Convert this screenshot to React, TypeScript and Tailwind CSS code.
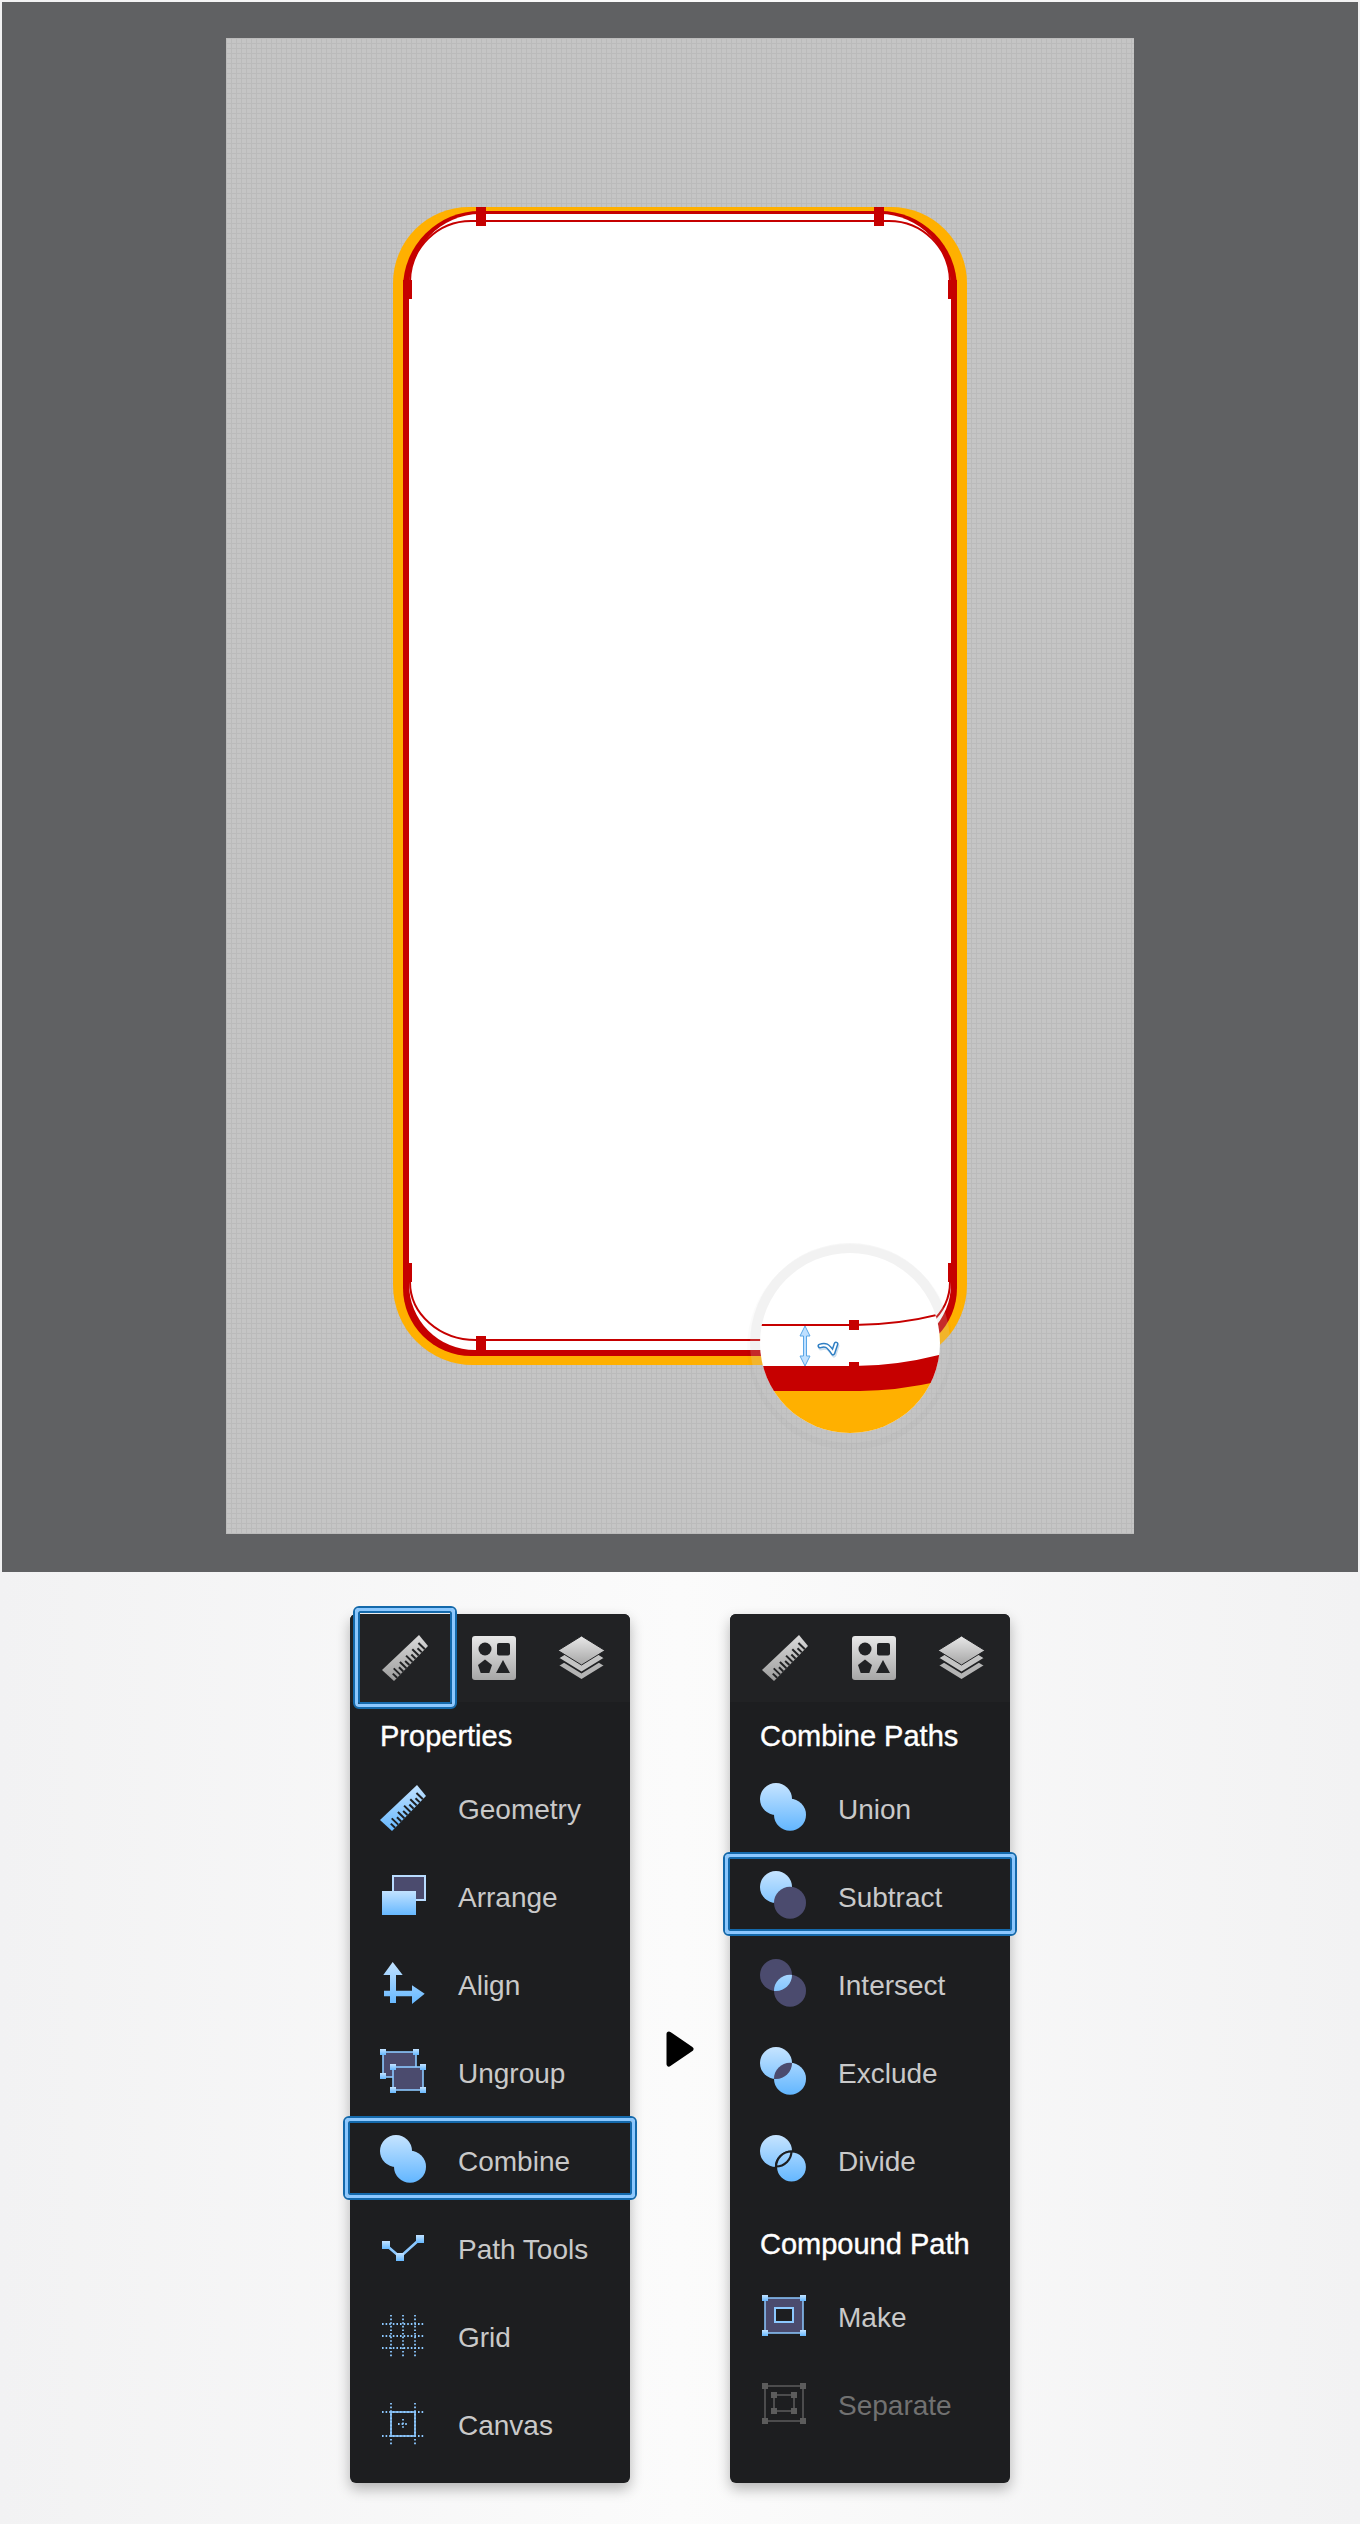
import type { ReactNode } from 'react';

const BG = '#1d1e20';
const DARK = '#4b4b6e';
const BLUE = '#8cc8ff';
const RED = '#c60000';
const YELLOW = '#ffb000';

function Icon({ children }: { children: ReactNode }) {
  return (
    <svg width="46" height="46" viewBox="0 0 46 46" className="shrink-0 overflow-visible">
      {children}
    </svg>
  );
}

function Ruler({ fill, tick }: { fill: string; tick: string }) {
  // ticks are cut in from the lower right edge
  const ticks = Array.from({ length: 10 }, (_, i) => {
    const t = (i + 1) / 11;
    const x = 46 - 34 * t;
    const y = 11 + 35 * t;
    const len = i % 2 === 0 ? 9 : 6;
    return <line key={i} x1={x} y1={y} x2={x - 0.717 * len} y2={y - 0.697 * len} stroke={tick} strokeWidth="2" />;
  });
  return (
    <Icon>
      <polygon points="37,0 46,11 12,46 0,35" fill={fill} />
      {ticks}
    </Icon>
  );
}

function Shapes() {
  return (
    <svg width="44" height="44" viewBox="0 0 44 44" className="ml-[2px] shrink-0">
      <rect width="44" height="44" rx="3" fill="url(#grayGrad)" />
      <circle cx="13" cy="13" r="6.5" fill="#212224" />
      <rect x="25" y="7" width="13" height="12.5" rx="2" fill="#212224" />
      <polygon points="13,23.5 20,29 17.3,37 8.7,37 6,29" fill="#212224" />
      <polygon points="31,24 38,37 24,37" fill="#212224" />
    </svg>
  );
}

function Layers() {
  const d = 'M23.5 0 L47 14.5 L23.5 29 L0 14.5 Z';
  return (
    <svg width="47" height="44" viewBox="0 0 47 44" className="shrink-0">
      <path d={d} transform="translate(0 15)" fill="#b4b4b4" stroke="#212224" strokeWidth="1.6" />
      <path d={d} transform="translate(0 7.5)" fill="#c4c4c4" stroke="#212224" strokeWidth="1.6" />
      <path d={d} fill="url(#grayGrad)" stroke="#212224" strokeWidth="1" />
    </svg>
  );
}

function Handle({ x, y, s = 6, fill = 'url(#blueGrad)' }: { x: number; y: number; s?: number; fill?: string }) {
  return <rect x={x - s / 2} y={y - s / 2} width={s} height={s} fill={fill} />;
}

function ArrangeIcon() {
  return (
    <Icon>
      <rect x="13" y="3" width="32" height="24" fill={DARK} stroke="#b9dcff" strokeWidth="2" />
      <rect x="2" y="18" width="34" height="24" fill="url(#blueGrad)" />
    </Icon>
  );
}

function AlignIcon() {
  return (
    <Icon>
      <path
        d="M12.7 1 L22.7 14 L16 14 L16 29.7 L32 29.7 L32 24.3 L44.7 32.7 L32 43 L32 35.3 L16 35.3 L16 42 L10 42 L10 35.3 L4 35.3 L4 29.7 L10 29.7 L10 14 L3.3 14 Z"
        fill="url(#blueGrad)"
      />
    </Icon>
  );
}

function UngroupIcon() {
  return (
    <Icon>
      <rect x="3" y="3" width="33" height="25" fill={DARK} stroke={BLUE} strokeWidth="1.6" />
      <Handle x={3} y={3} /><Handle x={36} y={3} /><Handle x={3} y={27} />
      <rect x="13" y="18" width="30" height="23" fill={DARK} stroke={BLUE} strokeWidth="1.6" />
      <Handle x={13} y={18} /><Handle x={43} y={18} /><Handle x={13} y={41} /><Handle x={43} y={41} />
    </Icon>
  );
}

function UnionIcon() {
  return (
    <Icon>
      <circle cx="16" cy="14" r="16" fill="url(#blueUser)" />
      <circle cx="30" cy="29.7" r="16" fill="url(#blueUser)" />
    </Icon>
  );
}

function SubtractIcon() {
  return (
    <Icon>
      <circle cx="16" cy="14" r="16" fill="url(#blueUser)" />
      <circle cx="30" cy="29.7" r="16" fill={DARK} />
    </Icon>
  );
}

function IntersectIcon() {
  return (
    <Icon>
      <circle cx="16" cy="14" r="16" fill={DARK} />
      <circle cx="30" cy="29.7" r="16" fill={DARK} />
      <circle cx="16" cy="14" r="16" fill="url(#blueUser)" clipPath="url(#clipB)" />
    </Icon>
  );
}

function ExcludeIcon() {
  return (
    <Icon>
      <circle cx="16" cy="14" r="16" fill="url(#blueUser)" />
      <circle cx="30" cy="29.7" r="16" fill="url(#blueUser)" />
      <circle cx="16" cy="14" r="16" fill={DARK} clipPath="url(#clipB)" />
    </Icon>
  );
}

function DivideIcon() {
  return (
    <Icon>
      <circle cx="16" cy="14" r="16" fill="url(#blueUser)" />
      <circle cx="31.5" cy="30" r="15.5" fill="url(#blueUser)" stroke={BG} strokeWidth="2.2" />
      <circle cx="16" cy="14" r="15.5" fill="url(#blueUser)" stroke={BG} strokeWidth="2.2" clipPath="url(#clipC)" />
      <circle cx="31.5" cy="30" r="15.5" fill="none" stroke={BG} strokeWidth="2.2" clipPath="url(#clipA)" />
    </Icon>
  );
}

function PathToolsIcon() {
  return (
    <Icon>
      <polyline points="6,20 20,32 40,14" fill="none" stroke={BLUE} strokeWidth="2.6" />
      <Handle x={6} y={20} s={8} /><Handle x={20} y={32} s={8} /><Handle x={40} y={14} s={8} />
    </Icon>
  );
}

function GridIcon() {
  const pos = [11, 23, 35];
  return (
    <Icon>
      <g stroke={BLUE} strokeWidth="1.8" strokeDasharray="1.6 2">
        {pos.map((p) => (
          <g key={p}>
            <line x1={p} y1="2" x2={p} y2="44" />
            <line x1="2" y1={p} x2="44" y2={p} />
          </g>
        ))}
      </g>
    </Icon>
  );
}

function CanvasIcon() {
  return (
    <Icon>
      <g stroke={BLUE} strokeWidth="1.8" strokeDasharray="1.6 2">
        <line x1="11" y1="2" x2="11" y2="44" />
        <line x1="35" y1="2" x2="35" y2="44" />
        <line x1="2" y1="11" x2="44" y2="11" />
        <line x1="2" y1="35" x2="44" y2="35" />
        <line x1="23" y1="18" x2="23" y2="28" />
        <line x1="18" y1="23" x2="28" y2="23" />
      </g>
      <rect x="11" y="11" width="24" height="24" fill="none" stroke={BLUE} strokeWidth="1.6" />
    </Icon>
  );
}

function MakeIcon() {
  return (
    <Icon>
      <rect x="5" y="5" width="38" height="35" fill={DARK} stroke={BLUE} strokeWidth="1.5" />
      <rect x="15" y="15" width="18" height="14" fill={BG} stroke={BLUE} strokeWidth="2" />
      <Handle x={5} y={5} /><Handle x={43} y={5} /><Handle x={5} y={40} /><Handle x={43} y={40} />
    </Icon>
  );
}

function SeparateIcon() {
  const c = '#5c5c5c';
  return (
    <Icon>
      <rect x="5" y="5" width="38" height="35" fill="none" stroke={c} strokeWidth="1.5" />
      <rect x="14" y="14" width="20" height="16" fill="none" stroke={c} strokeWidth="1.5" />
      <Handle x={5} y={5} fill={c} /><Handle x={43} y={5} fill={c} /><Handle x={5} y={40} fill={c} /><Handle x={43} y={40} fill={c} />
      <Handle x={14} y={14} fill={c} /><Handle x={34} y={14} fill={c} /><Handle x={14} y={30} fill={c} /><Handle x={34} y={30} fill={c} />
    </Icon>
  );
}

function Highlight({ className }: { className: string }) {
  return (
    <div className={`absolute rounded-[6px] border-[2px] border-[#1469ab] ${className}`}>
      <div className="h-full w-full rounded-[4px] border-[3px] border-[#8cc8ff]">
        <div className="h-full w-full rounded-[2px] border-[2px] border-[#1469ab]" />
      </div>
    </div>
  );
}

function Row({ icon, label, selected, disabled }: { icon: ReactNode; label: string; selected?: boolean; disabled?: boolean }) {
  return (
    <div className="relative flex h-[88px] items-center gap-[32px] pl-[30px]">
      {selected && <Highlight className="-left-[7px] -right-[7px] top-0 h-[84px]" />}
      {icon}
      <span className={`pt-[3px] text-[28px] ${disabled ? 'text-[#717171]' : 'text-[#c9c9c9]'}`}>{label}</span>
    </div>
  );
}

function Heading({ children, className }: { children: string; className: string }) {
  return (
    <div className={`flex items-center pl-[30px] text-[29px] text-white [-webkit-text-stroke:0.4px_white] ${className}`}>
      {children}
    </div>
  );
}

function Tabs({ selected }: { selected?: boolean }) {
  return (
    <div className="relative flex h-[88px] items-center rounded-t-[6px] bg-[#212224] pl-[11px]">
      {selected && <Highlight className="left-[3px] -top-[8px] h-[103px] w-[104px]" />}
      <div className="flex h-[88px] w-[88px] items-center justify-center">
        <Ruler fill="url(#rulerGray)" tick="#212224" />
      </div>
      <div className="flex h-[88px] w-[88px] items-center justify-center">
        <Shapes />
      </div>
      <div className="flex h-[88px] w-[88px] items-center justify-center">
        <Layers />
      </div>
    </div>
  );
}

function Phone() {
  return (
    <svg viewBox="226 38 908 1496" className="block h-[1496px] w-[908px]">
      <defs>
        <clipPath id="lens">
          <circle cx="850" cy="1343" r="90" />
        </clipPath>
      </defs>
      <path
        d="M469 207 H891 A76 76 0 0 1 967 283 V1285 A80 80 0 0 1 887 1365 H473 A80 80 0 0 1 393 1285 V283 A76 76 0 0 1 469 207 Z"
        fill={YELLOW}
      />
      <path
        d="M480 211 H880 A77 77 0 0 1 957 288 V1288 A68 68 0 0 1 889 1356 H471 A68 68 0 0 1 403 1288 V288 A77 77 0 0 1 480 211 Z"
        fill={RED}
      />
      <path
        d="M480 214 H880 A71 74 0 0 1 951 288 V1284 A66 66 0 0 1 885 1350 H475 A66 66 0 0 1 409 1284 V288 A71 74 0 0 1 480 214 Z"
        fill="#fff"
      />
      <path
        d="M410 282 A61 61 0 0 1 471 221 H889 A61 61 0 0 1 950 282 M410 1282 A66 58 0 0 0 476 1340 H884 A66 58 0 0 0 950 1282"
        fill="none"
        stroke={RED}
        strokeWidth="2"
      />
      <rect x="476" y="207" width="10" height="19" fill={RED} />
      <rect x="874" y="207" width="10" height="19" fill={RED} />
      <rect x="476" y="1336" width="10" height="20" fill={RED} />
      <rect x="874" y="1336" width="10" height="20" fill={RED} />
      <rect x="403" y="280" width="9" height="19" fill={RED} />
      <rect x="948" y="280" width="9" height="19" fill={RED} />
      <rect x="403" y="1263" width="9" height="19" fill={RED} />
      <rect x="948" y="1263" width="9" height="19" fill={RED} />

      {/* magnifier */}
      <circle cx="850" cy="1347" r="103" fill="#000" fillOpacity="0.015" />
      <circle cx="850" cy="1343" r="100" fill="#d0d0d0" fillOpacity="0.2" />
      <g clipPath="url(#lens)">
        <rect x="750" y="1243" width="200" height="200" fill="#fff" />
        <path d="M750 1390 H860 Q900 1390 950 1378 V1443 H750 Z" fill={YELLOW} />
        <path d="M750 1366 H854 Q900 1366 950 1352 V1379 Q900 1391 860 1391 H750 Z" fill={RED} />
        <path d="M755 1325 H854 Q900 1325 945 1313" fill="none" stroke={RED} strokeWidth="2" />
        <rect x="849" y="1320" width="10" height="10" fill={RED} />
        <rect x="849" y="1362" width="10" height="6" fill={RED} />
        <path
          d="M805 1326 L810 1336 H806.5 V1356 H810 L805 1366 L800 1356 H803.5 V1336 H800 Z"
          fill="#bfe0ff"
          stroke="#5aa6e6"
          strokeWidth="1"
        />
        <path d="M820 1346 C825 1344 828 1345 833 1353 L836 1344" fill="none" stroke="#cfe0ef" strokeWidth="5" strokeLinecap="round" strokeLinejoin="round" transform="translate(1 2)" />
        <path d="M820 1346 C825 1344 828 1345 833 1353 L836 1344" fill="none" stroke="#2f7fc4" strokeWidth="5" strokeLinecap="round" strokeLinejoin="round" />
        <path d="M820 1346 C825 1344 828 1345 833 1353 L836 1344" fill="none" stroke="#fff" strokeWidth="2" strokeLinecap="round" strokeLinejoin="round" />
      </g>
    </svg>
  );
}

export default function App() {
  return (
    <div className="h-[2524px] w-[1360px] overflow-hidden bg-[linear-gradient(90deg,#f2f2f3,#fbfbfb_50%,#f2f2f3)] font-['Liberation_Sans',sans-serif]">
      {/* shared gradients and clips for the icons */}
      <svg className="block h-0 w-0">
        <defs>
          <linearGradient id="blueGrad" x1="0" y1="0" x2="0" y2="1">
            <stop offset="0" stopColor="#c2e2ff" />
            <stop offset="1" stopColor="#66b8ff" />
          </linearGradient>
          <linearGradient id="blueUser" gradientUnits="userSpaceOnUse" x1="0" y1="-2" x2="0" y2="46">
            <stop offset="0" stopColor="#c6e4ff" />
            <stop offset="1" stopColor="#62b6ff" />
          </linearGradient>
          <linearGradient id="grayGrad" x1="0" y1="0" x2="0" y2="1">
            <stop offset="0" stopColor="#e8e8e8" />
            <stop offset="1" stopColor="#a6a6a6" />
          </linearGradient>
          <linearGradient id="rulerGray" x1="0" y1="0" x2="0" y2="1">
            <stop offset="0" stopColor="#dadada" />
            <stop offset="1" stopColor="#9c9c9c" />
          </linearGradient>
          <clipPath id="clipA">
            <circle cx="16" cy="14" r="16" />
          </clipPath>
          <clipPath id="clipB">
            <circle cx="30" cy="29.7" r="16" />
          </clipPath>
          <clipPath id="clipC">
            <circle cx="31.5" cy="30" r="15.5" />
          </clipPath>
        </defs>
      </svg>

      {/* artboard */}
      <div className="mx-[2px] mt-[2px] flex h-[1570px] justify-center bg-[#606163] pt-[36px]">
        <div className="h-[1496px] w-[908px] bg-[#c5c5c5] bg-[linear-gradient(#bbbbbb_1px,transparent_1px),linear-gradient(90deg,#bbbbbb_1px,transparent_1px)] bg-[length:5px_5px]">
          <Phone />
        </div>
      </div>

      {/* panels */}
      <div className="mt-[42px] flex justify-center gap-[36px]">
        <div className="h-[869px] w-[280px] rounded-[6px] bg-[#1d1e20] shadow-[0_6px_14px_rgba(0,0,0,0.28)]">
          <Tabs selected />
          <Heading className="h-[62px] pt-[8px]">Properties</Heading>
          <Row icon={<Ruler fill="url(#blueGrad)" tick={BG} />} label="Geometry" />
          <Row icon={<ArrangeIcon />} label="Arrange" />
          <Row icon={<AlignIcon />} label="Align" />
          <Row icon={<UngroupIcon />} label="Ungroup" />
          <Row icon={<UnionIcon />} label="Combine" selected />
          <Row icon={<PathToolsIcon />} label="Path Tools" />
          <Row icon={<GridIcon />} label="Grid" />
          <Row icon={<CanvasIcon />} label="Canvas" />
        </div>

        <div className="flex items-center">
          <svg width="28" height="36" viewBox="0 0 28 36" className="block">
            <path d="M3 3 L25 18 L3 33 Z" fill="#000" stroke="#000" strokeWidth="5" strokeLinejoin="round" />
          </svg>
        </div>

        <div className="h-[869px] w-[280px] rounded-[6px] bg-[#1d1e20] shadow-[0_6px_14px_rgba(0,0,0,0.28)]">
          <Tabs />
          <Heading className="h-[62px] pt-[8px]">Combine Paths</Heading>
          <Row icon={<UnionIcon />} label="Union" />
          <Row icon={<SubtractIcon />} label="Subtract" selected />
          <Row icon={<IntersectIcon />} label="Intersect" />
          <Row icon={<ExcludeIcon />} label="Exclude" />
          <Row icon={<DivideIcon />} label="Divide" />
          <Heading className="h-[68px] pt-[14px]">Compound Path</Heading>
          <Row icon={<MakeIcon />} label="Make" />
          <Row icon={<SeparateIcon />} label="Separate" disabled />
        </div>
      </div>
    </div>
  );
}
